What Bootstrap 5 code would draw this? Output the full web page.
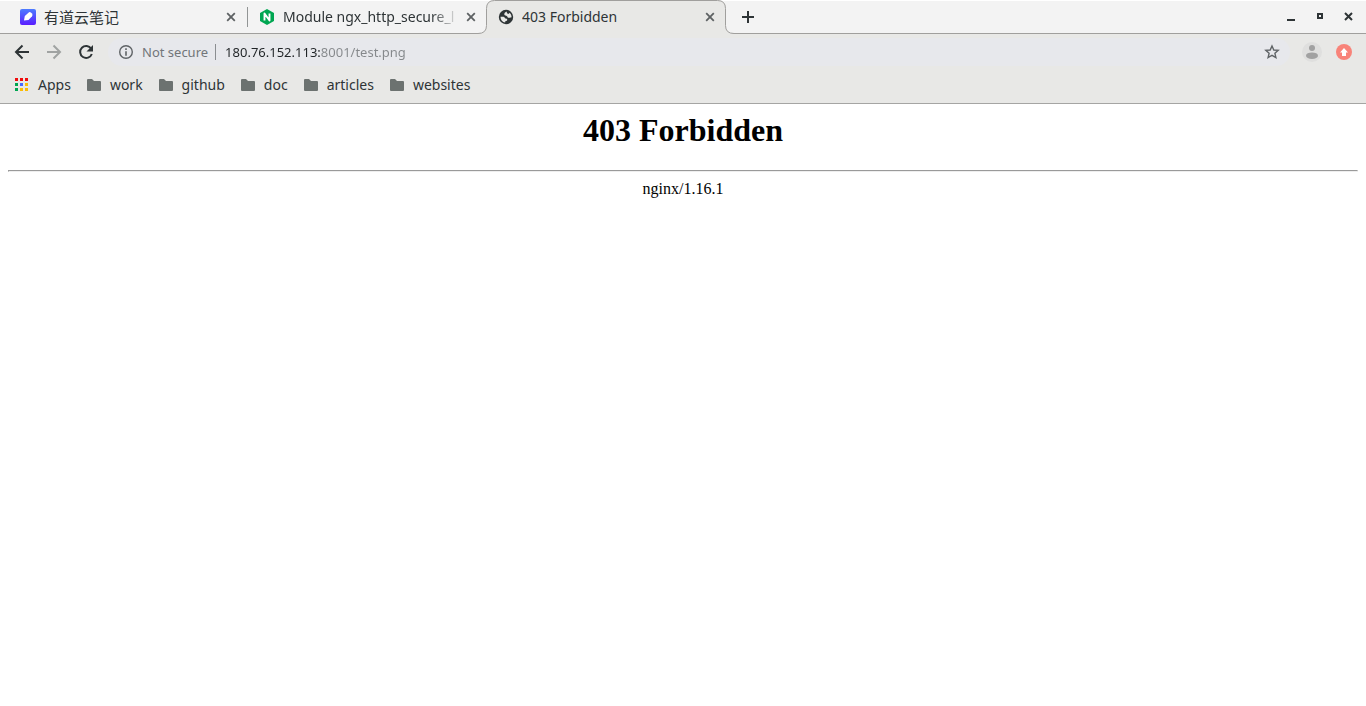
<!DOCTYPE html>
<html lang="en">
<head>
<meta charset="utf-8">
<meta name="viewport" content="width=device-width, initial-scale=1">
<title>403 Forbidden</title>
<link href="https://cdn.jsdelivr.net/npm/bootstrap@5.3.0/dist/css/bootstrap.min.css" rel="stylesheet">
<style>
  body { background: #fff; color: #2e3436; font: 14px/20px "Noto Sans", "Noto Sans CJK SC", sans-serif; }
  button, a { color: inherit; }
  button { border: 0; background: none; padding: 0; }
  svg { display: block; flex: none; }
  .strip { height: 34px; background: #f3f3f3; box-shadow: inset 0 -1px #a09f9d, inset 0 1px #fff; padding-left: 9px; }
  .tab { width: 239px; height: 34px; padding: 0 8px 0 11px; }
  .tab-title { overflow: hidden; white-space: nowrap; margin-right: 4px; }
  .tab-cjk { font-size: 15px; }
  .tab-fade { -webkit-mask-image: linear-gradient(to left, transparent, #000 28px); mask-image: linear-gradient(to left, transparent, #000 28px); }
  .divided { border-right: 1px solid #929595; height: 20px; }
  .tab-shape { left: -9px; top: 0; }
  .new-tab { margin-left: 15px; }
  .window-buttons { gap: 16px; padding-right: 11px; }
  .chrome-bar { background: #e8e8e6; }
  .tools { height: 36px; padding: 0 14px; }
  .omnibox { height: 28px; border-radius: 14px; background: #e7e8ec; padding: 0 10px; margin-left: 14px; margin-right: 12px; font-size: 13px; color: #72767a; }
  .secure { border-right: 1px solid #8b8e91; height: 16px; line-height: 16px; padding-right: 7px; margin-right: 9px; }
  .address { border: 0; padding: 0; outline: 0; width: 100%; height: 20px; font: inherit; -webkit-text-fill-color: transparent;
    background: linear-gradient(to right, #202427 96px, #85888b 96px); -webkit-background-clip: text; background-clip: text; }
  .update { margin-left: 14px; }
  .marks { height: 34px; padding: 0 15px 4px; gap: 15px; border-bottom: 1px solid #a5a5a3; }
  .apps-icon { margin-right: 10px; }
  .server-page { padding: 8px; color: #000; font: 16px/18px "Liberation Serif", serif; text-align: center; }
  .server-page h1 { font-size: 32px; font-weight: 700; line-height: 37px; margin: 0 0 21px; }
  .server-page hr { margin: 0 0 8px; height: 2px; border: 1px solid; border-color: #9a9a9a #eee #eee #9a9a9a; opacity: 1; }
</style>
</head>
<body>
<header>
  <div class="strip d-flex align-items-center">
    <div class="tab d-flex align-items-center pe-0">
      <svg class="me-2" width="16" height="16" viewBox="0 0 16 16"><defs><linearGradient id="note" x2="0" y2="1"><stop stop-color="#4d7cff"/><stop offset="1" stop-color="#5a1dff"/></linearGradient></defs><rect width="16" height="16" rx="2" fill="url(#note)"/><path d="M4 11.500 4.800 7 9 3.200q1.600-.6 3 1.400 1 1.500 0 2.600L8.500 11z" fill="#fff"/></svg>
      <span class="tab-title tab-cjk flex-grow-1">有道云笔记</span>
      <button type="button" class="me-2" aria-label="Close tab"><svg width="16" height="16" viewBox="0 0 16 16"><path d="m4.200 4.200 7.600 7.600m0-7.600-7.600 7.600" stroke="#5d6163" stroke-width="1.800"/></svg></button>
      <span class="divided"></span>
    </div>
    <div class="tab d-flex align-items-center">
      <svg class="me-2" width="16" height="16" viewBox="0 0 16 16"><path d="M8 0 15 4v8l-7 4-7-4V4z" fill="#00a651"/><path d="M5.500 11.500v-7l5 7v-7" fill="none" stroke="#fff" stroke-width="1.900" stroke-linejoin="round"/></svg>
      <span class="tab-title tab-fade flex-grow-1">Module ngx_http_secure_l</span>
      <button type="button" aria-label="Close tab"><svg width="16" height="16" viewBox="0 0 16 16"><path d="m4.200 4.200 7.600 7.600m0-7.600-7.600 7.600" stroke="#5d6163" stroke-width="1.800"/></svg></button>
    </div>
    <div class="tab d-flex align-items-center position-relative">
      <svg class="tab-shape position-absolute" width="256" height="34" viewBox="0 0 256 34"><path d="M0 33.500q8.500 0 8.500-8V8.500q0-8 8-8h223q8 0 8 8v17q0 8 8.500 8V34H0z" fill="#e8e8e6"/><path d="M0 33.500q8.500 0 8.500-8V8.500q0-8 8-8h223q8 0 8 8v17q0 8 8.500 8" fill="none" stroke="#a09f9d"/></svg>
      <svg class="me-2 position-relative" width="16" height="16" viewBox="0 0 16 16"><circle cx="8" cy="8" r="7.200" fill="#2e3436"/><path d="M8.800 2.600C7.400 3 6.300 4 6.300 5.200c0 1 .8 1.400 1.900 1.500.8.100 1 .6 1.300 1.200.4.800 1.300.9 2.200.8l1.900-.5c-.1-1.900-.9-3.400-2.200-4.400-.1.900-.8 1.300-1.500 1-.8-.4-1.300-1-1.100-2.200zM2.500 7.700c-.1 3 1.900 5.400 4.700 5.900v-1.400c1.200.1 2.100-.4 2.100-1.400 0-1.100-1-1.300-2-1.400C6.800 8.200 6 7.700 4.800 7.700z" fill="#e8e8e6"/></svg>
      <span class="tab-title flex-grow-1 position-relative">403 Forbidden</span>
      <button type="button" class="position-relative" aria-label="Close tab"><svg width="16" height="16" viewBox="0 0 16 16"><path d="m4.200 4.200 7.600 7.600m0-7.600-7.600 7.600" stroke="#5d6163" stroke-width="1.800"/></svg></button>
    </div>
    <button type="button" class="new-tab position-relative" aria-label="New tab"><svg width="14" height="14" viewBox="0 0 14 14"><path d="M7 1v12M1 7h12" stroke="#2e3436" stroke-width="2"/></svg></button>
    <div class="window-buttons d-flex ms-auto">
      <button type="button" aria-label="Minimize"><svg width="13" height="16" viewBox="0 0 13 16"><path d="M3 10h8v2H3z" fill="#2e3436"/></svg></button>
      <button type="button" aria-label="Restore"><svg width="13" height="16" viewBox="0 0 13 16"><path d="M5 5h4v4H5z" fill="none" stroke="#2e3436" stroke-width="2"/></svg></button>
      <button type="button" aria-label="Close window"><svg width="13" height="16" viewBox="0 0 13 16"><path d="m3 4 7 7m0-7-7 7" stroke="#2e3436" stroke-width="2"/></svg></button>
    </div>
  </div>

  <div class="chrome-bar tools d-flex align-items-center">
    <div class="d-flex gap-3">
      <button type="button" aria-label="Back"><svg width="16" height="16" viewBox="0 0 16 16"><path d="M15 8H2m6.500-6.500L2 8l6.500 6.500" fill="none" stroke="#2e3436" stroke-width="2"/></svg></button>
      <button type="button" aria-label="Forward"><svg width="16" height="16" viewBox="0 0 16 16"><path d="M1 8h13M7.500 1.500 14 8l-6.500 6.500" fill="none" stroke="#a0a3a2" stroke-width="2"/></svg></button>
      <button type="button" aria-label="Reload"><svg width="16" height="16" viewBox="0 0 16 16"><path d="M13.200 4.700A6 6 0 1 0 13.800 10" fill="none" stroke="#2e3436" stroke-width="2"/><path d="M15 1v6.500H8.500z" fill="#2e3436"/></svg></button>
    </div>
    <div class="omnibox d-flex align-items-center flex-grow-1">
      <svg class="me-2" width="16" height="16" viewBox="0 0 16 16"><circle cx="8" cy="8" r="6.300" fill="none" stroke="#5f6366" stroke-width="1.400"/><path d="M7.200 4.300h1.600v1.600H7.200zm0 2.900h1.600v4.500H7.200z" fill="#5f6366"/></svg>
      <span class="secure text-nowrap">Not secure</span>
      <input class="address" type="text" value="180.76.152.113:8001/test.png" aria-label="Address" spellcheck="false">
      <button type="button" aria-label="Bookmark this page"><svg width="16" height="16" viewBox="0 0 16 16"><path d="m8 2 1.800 4 4.400.4-3.300 2.900 1 4.300L8 11.300l-3.900 2.300 1-4.300-3.300-2.900 4.400-.4z" fill="none" stroke="#5f6366" stroke-width="1.400"/></svg></button>
    </div>
    <button type="button" aria-label="Profile"><svg width="20" height="20" viewBox="0 0 20 20"><circle cx="10" cy="10" r="10" fill="#dfdfde"/><circle cx="10" cy="6" r="3" fill="#a1a1a1"/><ellipse cx="10" cy="13.700" rx="6" ry="3.300" fill="#a1a1a1"/></svg></button>
    <button type="button" class="update" aria-label="Update browser"><svg width="16" height="16" viewBox="0 0 16 16"><circle cx="8" cy="8" r="8" fill="#f88379"/><path d="m8 4 4 4.500h-2V12H6V8.500H4z" fill="#fff"/></svg></button>
  </div>

  <nav class="chrome-bar marks d-flex align-items-center" aria-label="Bookmarks">
    <a href="#" class="d-flex align-items-center text-decoration-none"><svg class="apps-icon" width="13" height="13" viewBox="0 0 13 13"><path d="M0 0h3v3H0zm5 0h3v3H5zm5 0h3v3h-3z" fill="#f00c0c"/><path d="M0 5h3v3H0zm0 5h3v3H0z" fill="#00a651"/><path d="M5 5h3v3H5z" fill="#4868ff"/><path d="M10 5h3v3h-3zm-5 5h3v3H5zm5 0h3v3h-3z" fill="#fbbc05"/></svg>Apps</a>
    <a href="#" class="d-flex align-items-center text-decoration-none"><svg class="me-2" width="16" height="16" viewBox="0 0 16 16"><path d="M1 3q0-1 1-1h4l2 2h6q1 0 1 1v8q0 1-1 1H2q-1 0-1-1z" fill="#6c7270"/></svg>work</a>
    <a href="#" class="d-flex align-items-center text-decoration-none"><svg class="me-2" width="16" height="16" viewBox="0 0 16 16"><path d="M1 3q0-1 1-1h4l2 2h6q1 0 1 1v8q0 1-1 1H2q-1 0-1-1z" fill="#6c7270"/></svg>github</a>
    <a href="#" class="d-flex align-items-center text-decoration-none"><svg class="me-2" width="16" height="16" viewBox="0 0 16 16"><path d="M1 3q0-1 1-1h4l2 2h6q1 0 1 1v8q0 1-1 1H2q-1 0-1-1z" fill="#6c7270"/></svg>doc</a>
    <a href="#" class="d-flex align-items-center text-decoration-none"><svg class="me-2" width="16" height="16" viewBox="0 0 16 16"><path d="M1 3q0-1 1-1h4l2 2h6q1 0 1 1v8q0 1-1 1H2q-1 0-1-1z" fill="#6c7270"/></svg>articles</a>
    <a href="#" class="d-flex align-items-center text-decoration-none"><svg class="me-2" width="16" height="16" viewBox="0 0 16 16"><path d="M1 3q0-1 1-1h4l2 2h6q1 0 1 1v8q0 1-1 1H2q-1 0-1-1z" fill="#6c7270"/></svg>websites</a>
  </nav>
</header>
<main class="server-page">
  <h1>403 Forbidden</h1>
  <hr>
  <div>nginx/1.16.1</div>
</main>
<script src="https://cdn.jsdelivr.net/npm/bootstrap@5.3.0/dist/js/bootstrap.bundle.min.js"></script>
</body>
</html>
